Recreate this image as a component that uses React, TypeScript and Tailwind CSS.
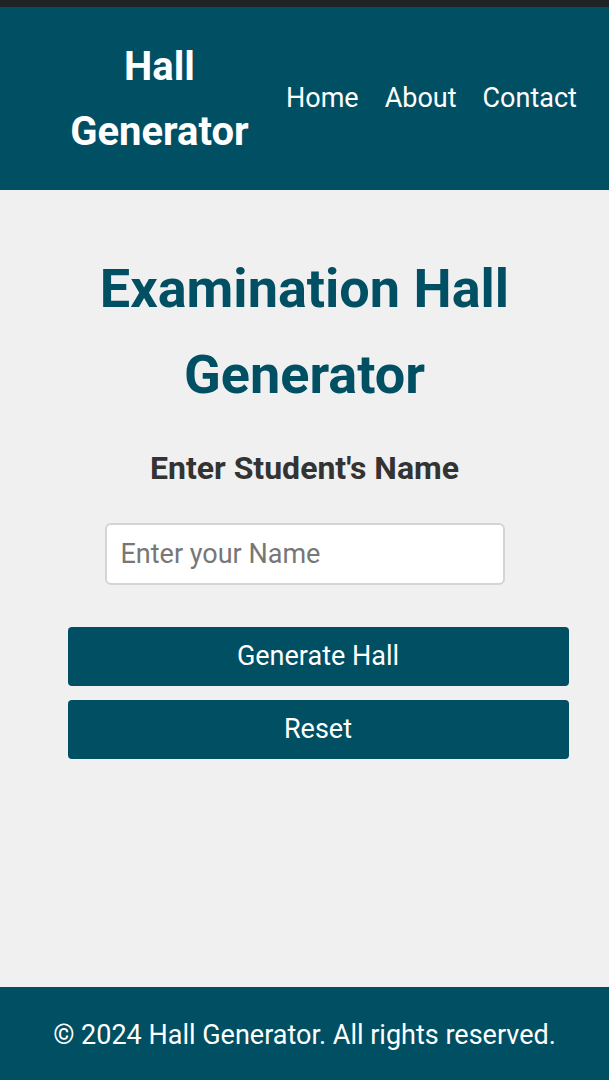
import React from "react";

export default function App() {
  return (
    <div className="min-h-[1080px] h-[1080px] flex flex-col bg-[#f0f0f0] text-[#333]" style={{ fontFamily: "Roboto, 'Liberation Sans', sans-serif" }}>
      <div className="h-[7px] bg-[#1f2326]" />
      <header className="h-[183px] bg-[#004f63] flex items-center text-white">
        <div className="w-[286px] pl-[33px] flex justify-center">
          <h1 className="text-[40px] font-bold leading-[65px] text-center whitespace-nowrap">Hall<br />Generator</h1>
        </div>
        <nav className="flex gap-[26px] text-[27px] whitespace-nowrap">
          <a>Home</a>
          <a>About</a>
          <a>Contact</a>
        </nav>
      </header>
      <main className="flex-1 flex flex-col items-center">
        <h2 className="mt-[56px] text-[54px] font-bold leading-[86px] text-center text-[#004f63] w-[480px]">
          Examination Hall Generator
        </h2>
        <h3 className="mt-[30px] text-[32px] font-bold text-[#333] leading-[40px]">Enter Student's Name</h3>
        <input
          placeholder="Enter your Name"
          className="mt-[35px] w-[400px] h-[62px] bg-white border-2 border-[#d4d4d4] rounded-[6px] px-[14px] text-[27px] placeholder:text-[#777] outline-none"
        />
        <div className="w-full flex flex-col items-center pl-[27px]">
          <button className="mt-[42px] w-[501px] h-[59px] bg-[#004f63] text-white rounded-[4px] text-[27px]">Generate Hall</button>
          <button className="mt-[14px] w-[501px] h-[59px] bg-[#004f63] text-white rounded-[4px] text-[27px]">Reset</button>
        </div>
      </main>
      <footer className="h-[93px] pt-[4px] bg-[#004f63] flex items-center justify-center text-white text-[27px]">
        © 2024 Hall Generator. All rights reserved.
      </footer>
    </div>
  );
}
